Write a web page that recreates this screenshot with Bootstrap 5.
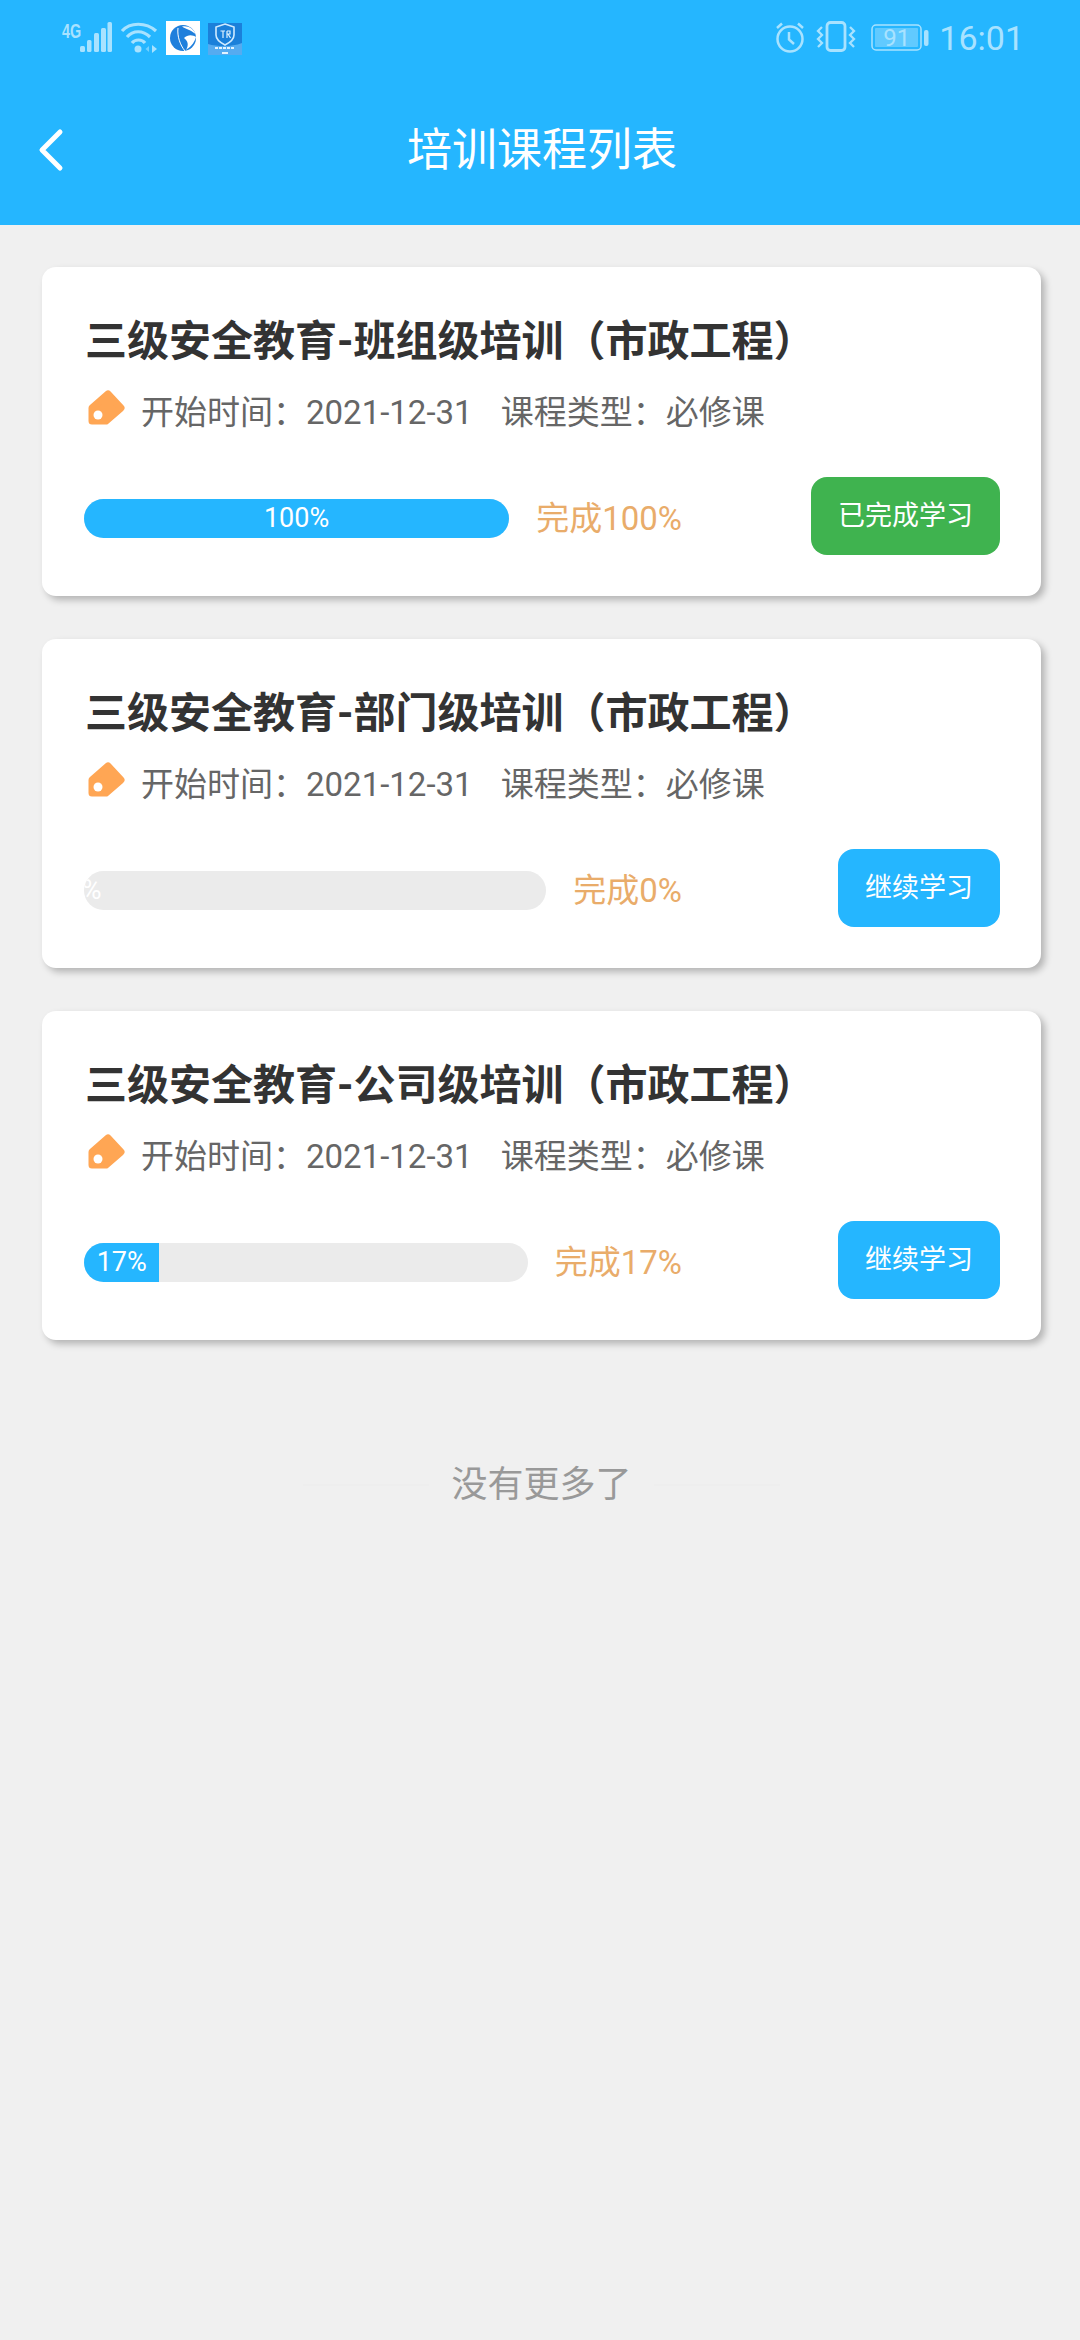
<!DOCTYPE html>
<html lang="zh-CN">
<head>
  <meta charset="UTF-8">
  <meta name="viewport" content="width=device-width, initial-scale=1.0">
  <title>培训课程列表</title>
  <link rel="stylesheet" href="https://cdn.jsdelivr.net/npm/bootstrap@5.3.0/dist/css/bootstrap.min.css">
  <style>
    body { background: #f0f0f0; font-family: Roboto, "Noto Sans CJK SC", sans-serif; min-height: 2340px; }
    .app-head { background: #25b6ff; height: 225px; color: #fff; }
    .status-row { height: 75px; padding: 21px 56px 0 62px; color: #a8e2ff; }
    .net-label { font: 700 20px/1 "Liberation Sans", sans-serif; transform: scaleX(.72); transform-origin: left top; width: 18px; }
    .clock-text { font-size: 34px; line-height: 1; margin-left: 10px; margin-top: 0; }
    .gap-alarm { margin-left: 10px; }
    .gap-battery { margin-left: 15px; margin-top: 3px; width: 58px; height: 28px; }
    .battery-num { left: 12px; top: 2px; font-size: 24px; line-height: 24px; }
    .head-bar { height: 150px; }
    .back-cell { width: 100px; padding-left: 38px; }
    .head-title { font-size: 45px; font-weight: 400; margin: 2px 0 0 4px; }
    .course-list { padding: 42px 39px 0 42px; gap: 43px; }
    .course-card { border: 0; border-radius: 14px; height: 329px; box-shadow: 4px 4px 7px rgba(0, 0, 0, .25); }
    .course-body { padding: 47px 42px 41px 42px; }
    .course-title { font-size: 42px; line-height: 56px; font-weight: 700; color: #333; margin: 0 0 18px 1px; }
    .course-meta { font-size: 33px; line-height: 46px; color: #666; margin-left: 3px; height: 46px; padding-top: 4px; }
    .course-meta svg { margin-right: 14px; margin-top: -10px; }
    .meta-gap { margin-left: 28px; }
    .course-foot { margin-top: 43px; }
    .foot-left { width: 598px; margin-top: 4px; }
    .course-progress { height: 39px; border-radius: 20px; background: #ebebeb; }
    .course-progress .progress-bar { background: #25b6ff; font-size: 27px; color: #fff; }
    .bar-empty { align-items: center; overflow: visible !important; background: transparent !important; }
    .done-label { font-size: 33px; color: #e9ac6a; margin-left: 27px; white-space: nowrap; padding-top: 2px; }
    .course-btn { height: 78px; border: 0; border-radius: 16px; font-size: 27px; color: #fff; background: #25b6ff; padding: 0 27px; white-space: nowrap; margin-right: -1px; }
    .course-btn:hover { background: #25b6ff; color: #fff; }
    .course-btn.is-done { background: #3fb34f; }
    .course-btn.is-done:hover { background: #3fb34f; }
    .no-more { margin-top: 115px; font-size: 36px; line-height: 60px; color: #999; gap: 22px; padding-left: 3px; }
    .no-more-line { width: 126px; height: 2px; background: #eeeeee; }
  </style>
</head>
<body>
  <header class="app-head">
    <div class="status-row d-flex justify-content-between align-items-start">
      <div class="d-flex align-items-start">
        <span class="net-label">4G</span>
        <svg width="32" height="31" viewBox="0 0 32 31" fill="currentColor">
          <rect x="0" y="25" width="5" height="6" rx="1.5"/><rect x="7" y="19" width="4.5" height="12" rx="1.5"/><rect x="14" y="12" width="5" height="19" rx="1.5"/><rect x="21" y="7" width="5" height="24" rx="1.5"/><rect x="27.5" y="1" width="4.5" height="30" rx="1.5"/>
        </svg>
        <svg width="38" height="32" viewBox="0 0 38 32" fill="none" stroke="currentColor" stroke-width="3.2" class="ms-2">
          <path d="M2 10 C10 1 26 1 36 10"/><path d="M7 16 C13 9 23 9 30 16"/><path d="M12 22 C15 18 22 18 25 22"/>
          <circle cx="18" cy="28" r="3.5" fill="currentColor" stroke="none"/><path d="M32 24 L37 28 L32 32 Z" fill="currentColor" stroke="none"/><path d="M29 25 L25.500 28 L29 31 Z" fill="currentColor" stroke="none" opacity=".6"/>
        </svg>
        <svg width="34" height="34" viewBox="0 0 34 34" class="ms-2">
          <rect width="34" height="34" fill="#fff"/>
          <circle cx="17" cy="17" r="13" fill="#1f7fdc"/>
          <path d="M16 5.500 C22 4 28 8 29.500 13 C25 9 20 8 16 5.500 Z" fill="#fff"/>
          <path d="M18 17 C22 13 27 14 30 16 C28 23 24 26 20 29 C23 24 22 20 18 17 Z" fill="#fff"/>
          <path d="M12 7 C11 15 14 24 19 30" fill="none" stroke="#fff" stroke-width="1"/>
        </svg>
        <svg width="34" height="32" viewBox="0 0 34 32" class="ms-2" style="margin-top:2px">
          <rect width="34" height="32" fill="#1b80da"/>
          <path d="M0 21 C10 24 24 24 34 20 V32 H0 Z" fill="#55abf0"/>
          <path d="M17 1 L26 4 V12 C26 17 21 20 17 22 C13 20 8 17 8 12 V4 Z" fill="none" stroke="#cfeaff" stroke-width="1.6"/>
          <path d="M12.500 8 H17 M15 8 V15 M19 8 V15 M19 8 H22 V11 H19 M20 11 L22.500 15" stroke="#dff2ff" stroke-width="1.2" fill="none"/>
          <path d="M7 25 H27" stroke="#e2f3ff" stroke-width="2" stroke-dasharray="3 1"/><rect x="14" y="29" width="6" height="2" fill="#e2f3ff"/>
        </svg>
      </div>
      <div class="d-flex align-items-start">
        <svg width="32" height="32" viewBox="0 0 32 32" fill="none" stroke="currentColor" stroke-width="2.500">
          <circle cx="16" cy="18" r="12.500"/><path d="M15 11 V18.500 L20 23"/><path d="M3 7 L8 2.500 M29 7 L24 2.500"/>
        </svg>
        <svg width="40" height="32" viewBox="0 0 40 32" fill="none" stroke="currentColor" class="gap-alarm">
          <rect x="11" y="1.500" width="18" height="28" rx="3.500" stroke-width="2.800"/>
          <path d="M6 6 L2 10 L6 14 L2 18 L6 22 L2 26 M34 6 L38 10 L34 14 L38 18 L34 22 L38 26" stroke-width="2.300"/>
        </svg>
        <div class="position-relative gap-battery">
          <svg width="58" height="28" viewBox="0 0 58 28" fill="none" class="position-absolute top-0 start-0">
            <rect x="1" y="1" width="49" height="25" rx="4" stroke="currentColor" stroke-width="1.500"/>
            <rect x="4" y="4" width="43" height="19" rx="1" fill="#fff" opacity=".28"/>
            <rect x="53" y="6" width="4.500" height="16" rx="2" fill="currentColor"/>
          </svg>
          <span class="position-absolute battery-num">91</span>
        </div>
        <span class="clock-text">16:01</span>
      </div>
    </div>
    <div class="head-bar d-flex align-items-center">
      <div class="back-cell">
        <svg width="26" height="44" viewBox="0 0 26 44" fill="none" stroke="#fff" stroke-width="5" stroke-linecap="round" stroke-linejoin="round"><path d="M22 4 L4 22 L22 40"/></svg>
      </div>
      <h1 class="head-title flex-fill text-center">培训课程列表</h1>
      <div class="back-cell"></div>
    </div>
  </header>

  <main class="course-list d-flex flex-column" id="courses"></main>

  <div class="no-more d-flex justify-content-center align-items-center">
    <span class="no-more-line"></span><span>没有更多了</span><span class="no-more-line"></span>
  </div>

  <script>
    const courses = [
      { name: '三级安全教育-班组级培训（市政工程）', pct: 100, barWidth: 426, btn: '已完成学习', done: true },
      { name: '三级安全教育-部门级培训（市政工程）', pct: 0, barWidth: 463, btn: '继续学习' },
      { name: '三级安全教育-公司级培训（市政工程）', pct: 17, barWidth: 444, btn: '继续学习' }
    ];

    const tagIcon = `<svg width="40" height="40" viewBox="0 0 40 40"><path fill="#ffa654" stroke="#ffa654" stroke-width="7" stroke-linejoin="round" d="M5 33 V20 L21 6 L34 20 L19 33 Z"/><circle cx="11" cy="27" r="4.500" fill="#fff"/></svg>`;

    document.getElementById('courses').innerHTML = courses.map(c => `
      <div class="card course-card">
        <div class="course-body">
          <h2 class="course-title">${c.name}</h2>
          <div class="course-meta d-flex align-items-center">${tagIcon}<span>开始时间：2021-12-31</span><span class="meta-gap">课程类型：必修课</span></div>
          <div class="course-foot d-flex align-items-center justify-content-between">
            <div class="foot-left d-flex align-items-center">
              <div class="progress course-progress" style="width:${c.barWidth}px">
                <div class="progress-bar ${c.pct === 0 ? 'bar-empty' : ''}" style="width:${c.pct}%">${c.pct}%</div>
              </div>
              <span class="done-label">完成${c.pct}%</span>
            </div>
            <button class="btn course-btn ${c.done ? 'is-done' : ''}">${c.btn}</button>
          </div>
        </div>
      </div>
    `).join('');
  </script>
  <script src="https://cdn.jsdelivr.net/npm/bootstrap@5.3.0/dist/js/bootstrap.bundle.min.js"></script>
</body>
</html>
